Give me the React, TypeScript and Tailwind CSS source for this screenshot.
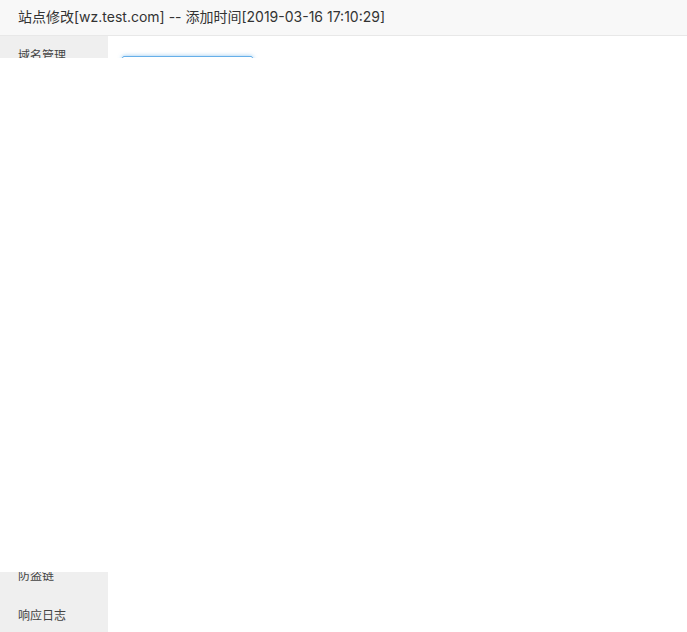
const menu = [
  '域名管理',
  '子目录绑定',
  '网站目录',
  '访问限制',
  '流量限制',
  '伪静态',
  '默认文档',
  '配置文件',
  'SSL',
  'PHP版本',
  'Tomcat',
  '重定向',
  '反向代理',
  '防盗链',
  '响应日志',
];

export default function App() {
  return (
    <div
      className="relative h-[632px] w-[687px] overflow-hidden bg-white text-[#333]"
      style={{ fontFamily: 'Inter, "Noto Sans CJK SC", sans-serif' }}
    >
      <div className="flex h-[36px] items-center border-b border-[#e8e8e8] bg-[#f8f8f8] pb-[3px] pl-[18px] text-[14px]">
        站点修改[wz.test.com] -- 添加时间[2019-03-16 17:10:29]
      </div>

      <div className="flex">
        <div className="w-[108px] shrink-0 bg-[#efefef]">
          {menu.map(item => (
            <div key={item} className="flex h-[40px] items-center pl-[18px] text-[12px] text-[#444]">
              {item}
            </div>
          ))}
        </div>
        <div className="flex-1 pl-[14px] pt-[20px]">
          <div className="h-[80px] w-[131px] rounded-[2px] border border-[#66afe9] shadow-[0_0_4px_rgba(102,175,233,0.7)]" />
        </div>
      </div>

      <div className="absolute left-0 right-0 top-[58px] h-[514px] bg-white" />
    </div>
  );
}
